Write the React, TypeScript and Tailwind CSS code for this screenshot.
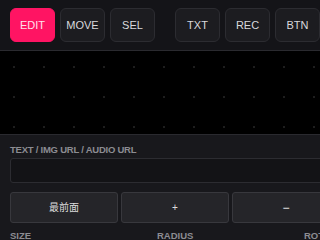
const tools = ['EDIT', 'MOVE', 'SEL'];
const shapes = ['TXT', 'REC', 'BTN'];

function ToolButton({ label, active }: { label: string; active?: boolean }) {
  return (
    <button
      className={
        'h-[34px] w-[45px] shrink-0 rounded-[6px] border text-[11px] ' +
        (active
          ? 'border-[#ff1463] bg-[#ff1463] text-[#ffe0ea]'
          : 'border-[#2c2c31] bg-[#1c1c20] text-[#d8d8dc]')
      }
    >
      {label}
    </button>
  );
}

export default function App() {
  return (
    <div className="h-[240px] w-[320px] overflow-hidden bg-[#18181c] font-['Liberation_Sans','Noto_Sans_CJK_JP',sans-serif]">
      <div className="flex h-[50px] gap-[5px] bg-[#141418] pl-[10px] pt-[8px]">
        {tools.map((t, i) => (
          <ToolButton key={t} label={t} active={i === 0} />
        ))}
        <div className="w-[10px] shrink-0" />
        {shapes.map((t) => (
          <ToolButton key={t} label={t} />
        ))}
      </div>

      <div className="h-[85px] border-y border-[#2a2a2f] bg-black bg-[radial-gradient(circle,#1e1e1e_1px,transparent_1.5px)] bg-[length:30px_30px] bg-[position:-1px_1px]" />

      <div className="px-[10px] pt-[8px]">
        <p className="text-[9.5px] leading-[13px] font-bold tracking-tight text-[#8c8c92]">TEXT / IMG URL / AUDIO URL</p>
        <div className="mt-[2px] h-[25px] w-[340px] rounded-[3px] border border-[#2c2c31] bg-[#131316]" />
        <div className="mt-[9px] flex gap-[3px]">
          <button className="h-[31px] w-[108px] shrink-0 rounded-[3px] border border-[#38383d] bg-[#252529] text-[10px] text-[#dcdcdc]">
            最前面
          </button>
          <button className="h-[31px] w-[108px] shrink-0 rounded-[3px] border border-[#38383d] bg-[#252529] text-[10px] text-[#dcdcdc]">
            +
          </button>
          <button className="h-[31px] w-[108px] shrink-0 rounded-[3px] border border-[#38383d] bg-[#252529] text-[12px] text-[#f0f0f0]">
            −
          </button>
        </div>
        <div className="mt-[6px] flex text-[9.5px] leading-[13px] font-bold text-[#8c8c92]">
          <span className="w-[147px] shrink-0">SIZE</span>
          <span className="w-[147px] shrink-0">RADIUS</span>
          <span className="w-[147px] shrink-0">ROTATION</span>
        </div>
      </div>
    </div>
  );
}
